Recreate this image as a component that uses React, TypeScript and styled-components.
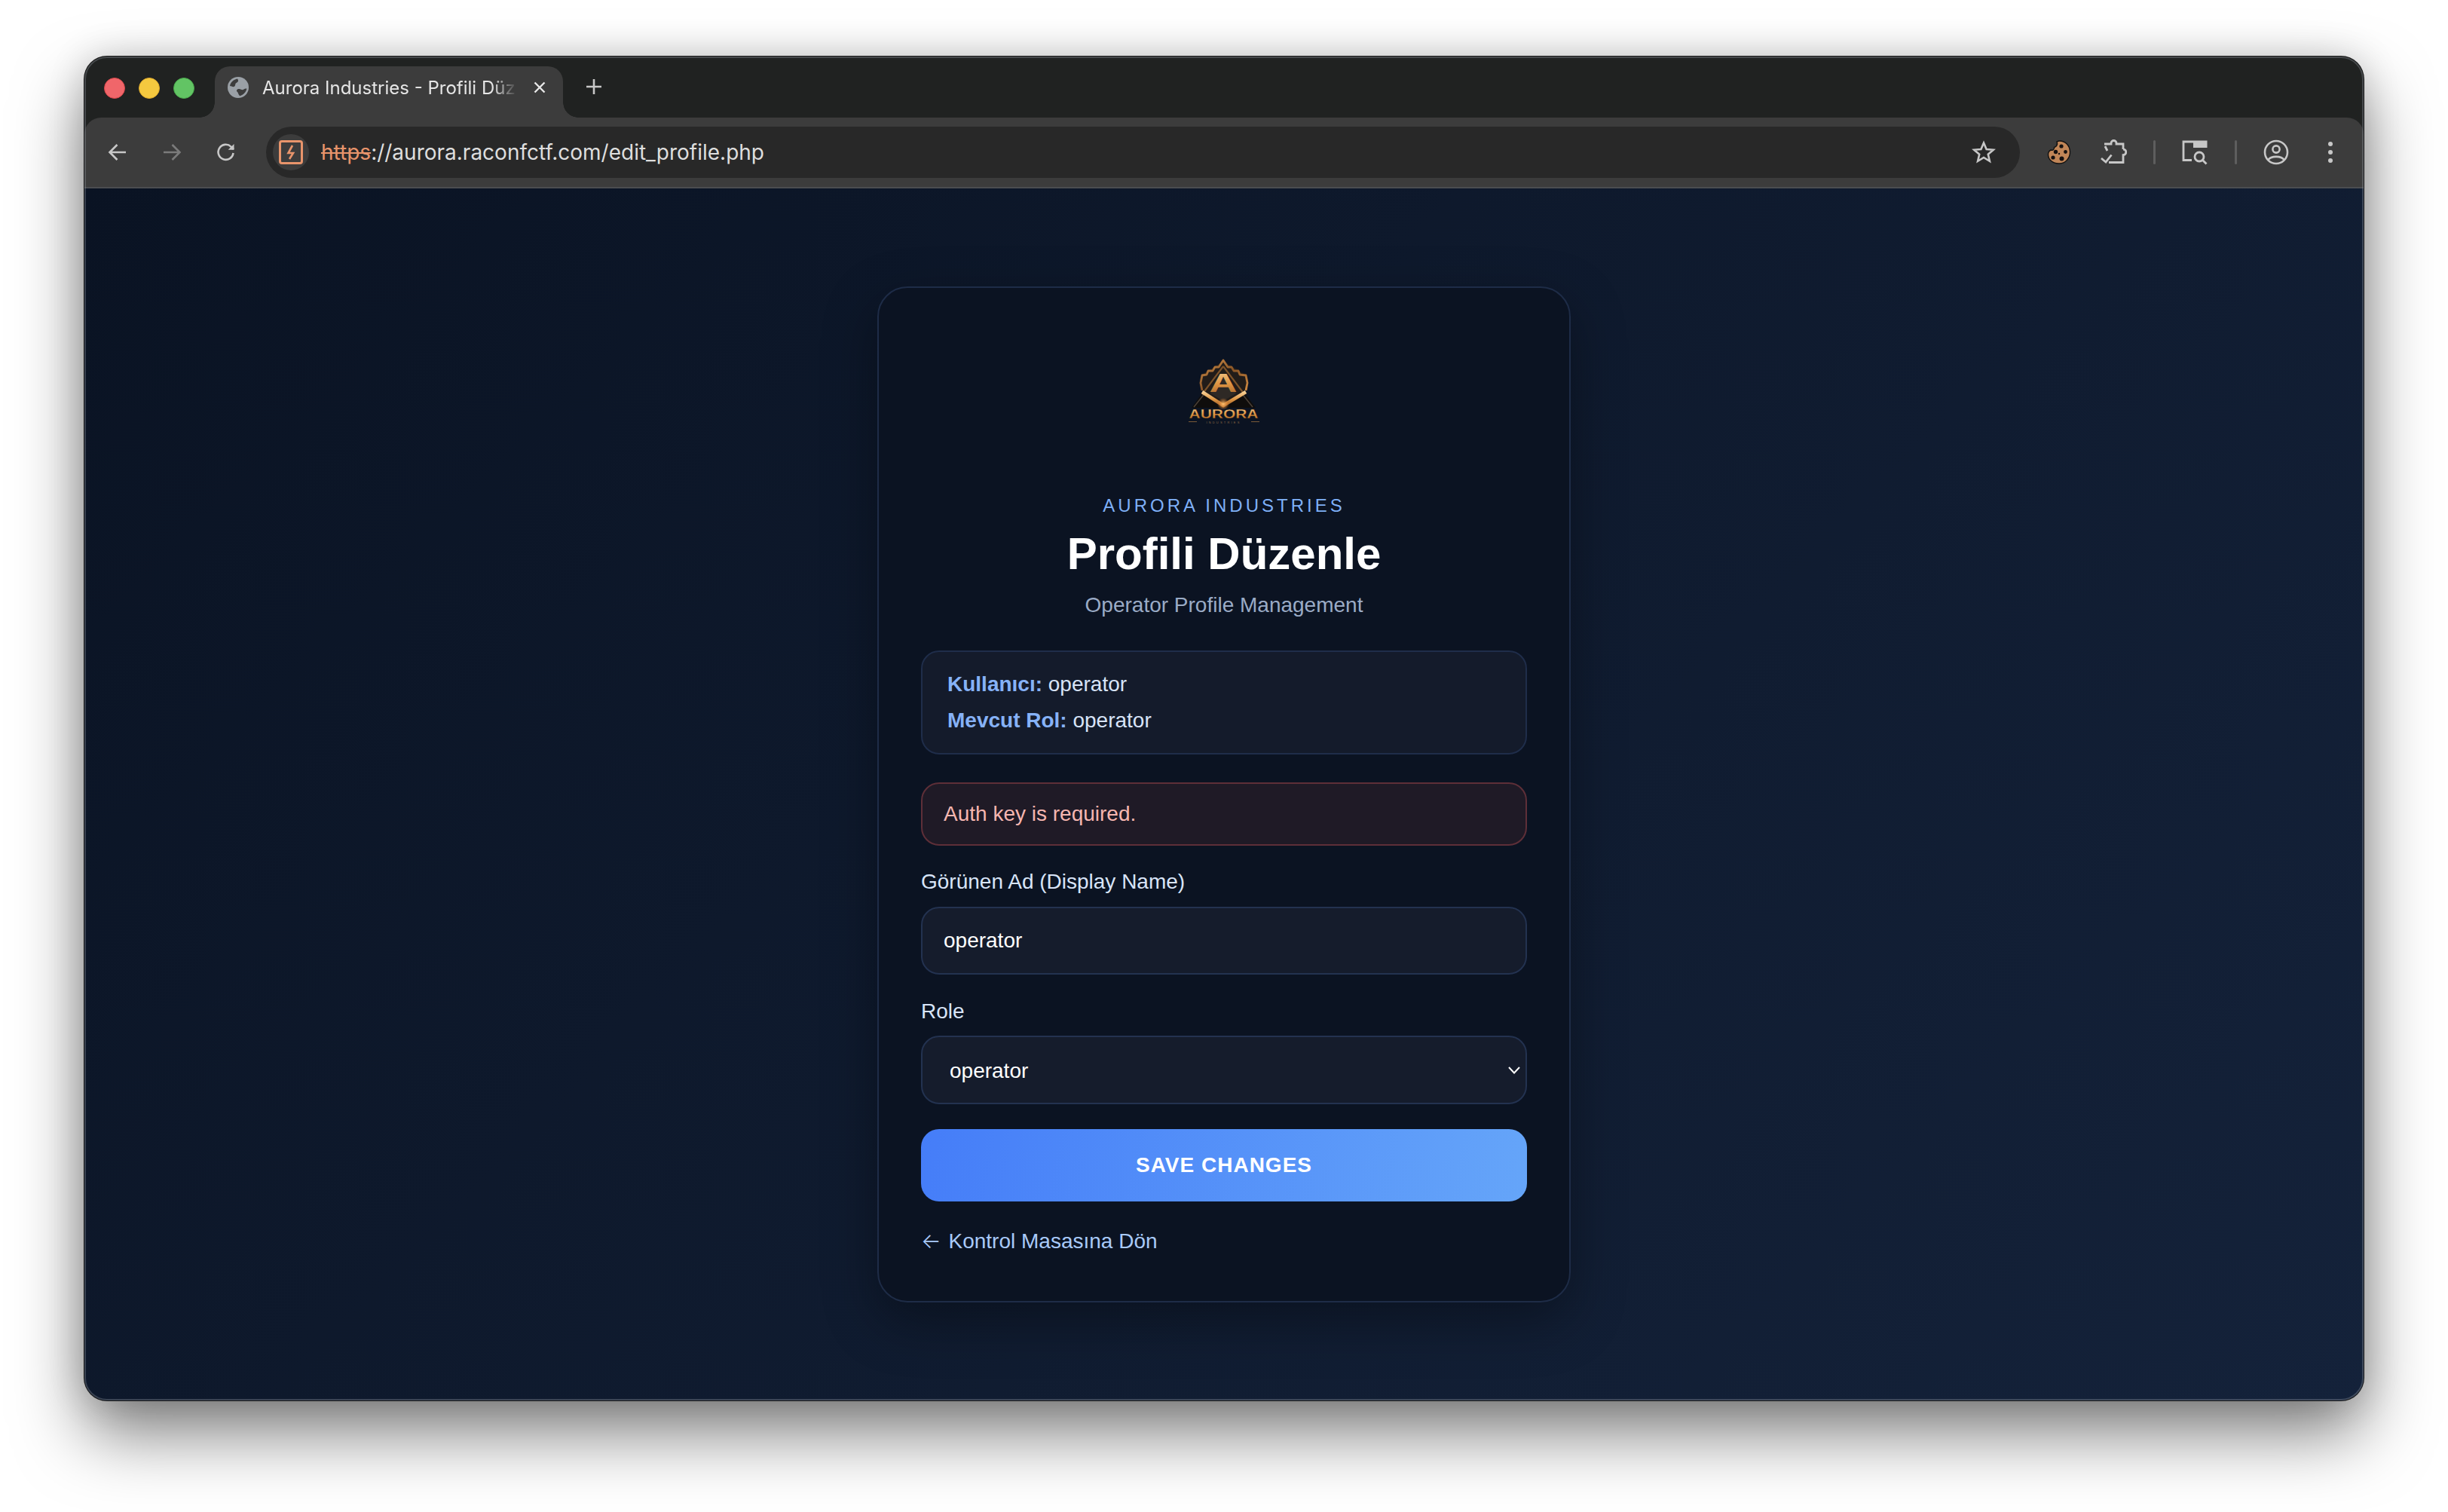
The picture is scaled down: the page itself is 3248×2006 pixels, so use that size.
import { createGlobalStyle } from 'styled-components'
import styled from 'styled-components'

const GlobalStyle = createGlobalStyle`
	html,
	body {
		margin: 0;
		background: #ffffff;
	}
	* {
		box-sizing: border-box;
	}
`

const ICON_GREY = '#c7c7c7'
const ORANGE = '#e8946b'

const Stage = styled.div`
	width: 3248px;
	height: 2006px;
	padding: 75px 112px 148px;
	overflow: hidden;
`

const BrowserWindow = styled.div`
	position: relative;
	display: flex;
	flex-direction: column;
	height: 1783px;
	border-radius: 30px;
	overflow: hidden;
	background: #202221;
	box-shadow: 0 0 0 1px #1a1a1a, 0 44px 90px rgba(0, 0, 0, 0.5), 0 0 50px rgba(0, 0, 0, 0.16);

	&::after {
		content: '';
		position: absolute;
		inset: 0;
		border-radius: 30px;
		border: 2px solid rgba(150, 155, 165, 0.33);
		pointer-events: none;
	}
`

const TabStrip = styled.div`
	display: flex;
	align-items: flex-start;
	height: 81px;
	padding: 13px 0 0 26px;
	flex-shrink: 0;
`

const TrafficLights = styled.div`
	display: flex;
	gap: 18px;
	margin-top: 15px;
`

const Light = styled.span<{ $color: string; $edge: string }>`
	width: 28px;
	height: 28px;
	border-radius: 50%;
	background: ${(props) => props.$color};
	border: 1px solid ${(props) => props.$edge};
`

const Tab = styled.div`
	position: relative;
	display: flex;
	align-items: center;
	width: 462px;
	height: 68px;
	margin-left: 27px;
	padding: 0 0 12px 17px;
	border-radius: 20px 20px 0 0;
	background: #3c3c3c;

	&::before,
	&::after {
		content: '';
		position: absolute;
		bottom: 0;
		width: 20px;
		height: 20px;
	}
	&::before {
		left: -20px;
		background: radial-gradient(circle at 0 0, transparent 19.5px, #3c3c3c 20px);
	}
	&::after {
		right: -20px;
		background: radial-gradient(circle at 100% 0, transparent 19.5px, #3c3c3c 20px);
	}
`

const TabTitle = styled.span`
	width: 342px;
	margin-left: 18px;
	white-space: nowrap;
	font: 400 24px 'Inter', 'Liberation Sans', sans-serif;
	color: #e6e6e6;
	-webkit-mask-image: linear-gradient(90deg, #000 89%, transparent 99%);
	mask-image: linear-gradient(90deg, #000 89%, transparent 99%);
`

const TabClose = styled.span`
	display: flex;
	margin-left: 17px;
	color: #e8e8e8;
`

const NewTab = styled.span`
	display: flex;
	margin: 16px 0 0 30px;
	color: ${ICON_GREY};
`

const Toolbar = styled.div`
	display: flex;
	align-items: center;
	height: 92px;
	padding: 0 8px;
	flex-shrink: 0;
	border-radius: 22px 22px 0 0;
	background: #3c3c3c;
`

const ToolbarRule = styled.div`
	height: 2px;
	flex-shrink: 0;
	background: #4b4d50;
`

const IconSlot = styled.span<{ $dim?: boolean }>`
	display: flex;
	align-items: center;
	justify-content: center;
	width: 72px;
	height: 68px;
	flex-shrink: 0;
	color: ${(props) => (props.$dim ? '#7b7b7b' : ICON_GREY)};
`

const Separator = styled.span`
	width: 36px;
	flex-shrink: 0;
	display: flex;
	justify-content: center;

	&::before {
		content: '';
		width: 3px;
		height: 32px;
		border-radius: 2px;
		background: #5e5e5e;
	}
`

const AddressBar = styled.div`
	display: flex;
	align-items: center;
	flex: 1;
	height: 68px;
	margin: 0 16px 0 17px;
	padding: 0 32px 0 9px;
	border-radius: 34px;
	background: #282828;
	color: ${ICON_GREY};
`

const SecurityChip = styled.span`
	display: flex;
	align-items: center;
	justify-content: center;
	width: 48px;
	height: 48px;
	border-radius: 50%;
	background: #3c3c3c;
	flex-shrink: 0;
`

const Url = styled.span`
	flex: 1;
	margin-left: 16px;
	font: 400 28px 'Inter', 'Liberation Sans', sans-serif;
	color: #dedede;
	white-space: nowrap;
`

const Struck = styled.span`
	color: ${ORANGE};
	text-decoration: line-through;
`

const Page = styled.div`
	flex: 1;
	display: flex;
	justify-content: center;
	align-items: flex-start;
	padding-top: 130px;
	background: linear-gradient(135deg, #0a1323 0%, #14223a 100%);
	font-family: 'Liberation Sans', Arial, sans-serif;
`

const Card = styled.div`
	display: flex;
	flex-direction: column;
	width: 920px;
	height: 1348px;
	padding: 78px 56px 0;
	border: 2px solid #1e2c47;
	border-radius: 40px;
	background: #0b1322;
	box-shadow: 0 24px 70px rgba(0, 0, 0, 0.35);
`

const LogoBox = styled.div`
	display: flex;
	justify-content: center;
	height: 110px;
	padding-left: 2px;
`

const Eyebrow = styled.div`
	margin-top: 86px;
	font-size: 24px;
	line-height: 30px;
	letter-spacing: 4px;
	text-align: center;
	color: #7fb0f7;
`

const Title = styled.h1`
	margin: 13px 0 0;
	font-size: 60px;
	line-height: 72px;
	font-weight: 700;
	text-align: center;
	color: #ffffff;
`

const Subtitle = styled.p`
	margin: 15px 0 0;
	font-size: 28px;
	line-height: 34px;
	text-align: center;
	color: #9aabc6;
`

const InfoBox = styled.div`
	margin-top: 43px;
	padding: 19px 33px 19px;
	border: 2px solid #1f2d4a;
	border-radius: 24px;
	background: #141b2b;
	font-size: 28px;
	line-height: 48px;
	color: #d8e4f8;
`

const InfoLabel = styled.strong`
	color: #86b2f7;
`

const ErrorBox = styled.div`
	margin-top: 37px;
	padding: 23px 28px 23px;
	border: 2px solid #5e2f38;
	border-radius: 24px;
	background: #1f1a26;
	font-size: 28px;
	line-height: 34px;
	color: #f6b6b0;
`

const FieldLabel = styled.label<{ $top: number; $gap: number }>`
	display: block;
	margin: ${(props) => props.$top}px 0 ${(props) => props.$gap}px;
	font-size: 28px;
	line-height: 34px;
	color: #d8e4f8;
`

const TextInput = styled.input`
	display: block;
	width: 100%;
	height: 90px;
	padding: 0 28px;
	border: 2px solid #233250;
	border-radius: 24px;
	background: #151c2c;
	font: 400 28px 'Liberation Sans', Arial, sans-serif;
	color: #ffffff;
	outline: none;
`

const RoleSelect = styled.select`
	display: block;
	width: 100%;
	height: 91px;
	padding: 2px 36px 0;
	border: 2px solid #233250;
	border-radius: 24px;
	background-color: #151c2c;
	appearance: none;
	font: 400 28px 'Liberation Sans', Arial, sans-serif;
	color: #ffffff;
	outline: none;
`

const SelectWrap = styled.div`
	position: relative;
`

const SelectCaret = styled.svg`
	position: absolute;
	right: 9px;
	top: 41px;
	pointer-events: none;
`

const SaveButton = styled.button`
	display: block;
	width: 100%;
	height: 96px;
	margin-top: 33px;
	border: 0;
	border-radius: 24px;
	background: linear-gradient(100deg, #457df8 0%, #65a5f9 100%);
	font: 700 28px 'Liberation Sans', Arial, sans-serif;
	letter-spacing: 1px;
	color: #ffffff;
`

const BackLink = styled.a`
	display: block;
	margin-top: 35px;
	font-size: 28px;
	line-height: 34px;
	color: #a9caf9;
`

const BackArrow = styled.span`
	margin-right: 2px;
	font-family: 'Inter', 'Liberation Sans', sans-serif;
	font-weight: 300;
`

const Globe = () => (
	<svg width="28" height="28" viewBox="0 0 28 28">
		<circle cx="14" cy="14" r="14" fill="#9aa0a6" />
		<path d="M3 12 C4 7 8 3.5 13 2.6 C15 5 14 7 11.5 8 C9.5 9 11 12 8.5 13 C6.5 13.6 5 12 3 12 Z" fill="#3c3c3c" />
		<path d="M25.4 15.5 C24.6 20 21 24 16.5 25.2 C14 24 14.5 21 12.5 19.5 C11 18 13 15.5 15.5 16 C18 16.6 19.5 18 21.5 16.5 C23 15.5 24 15.3 25.4 15.5 Z" fill="#3c3c3c" />
	</svg>
)

const CloseGlyph = () => (
	<svg width="18" height="18" viewBox="0 0 18 18" stroke="currentColor" strokeWidth="2.4" fill="none">
		<path d="M2.5 2.5 L15.5 15.5 M15.5 2.5 L2.5 15.5" />
	</svg>
)

const PlusGlyph = () => (
	<svg width="22" height="22" viewBox="0 0 22 22" stroke="currentColor" strokeWidth="2.6" fill="none">
		<path d="M11 1 V21 M1 11 H21" />
	</svg>
)

const BackGlyph = () => (
	<svg width="26" height="26" viewBox="0 0 26 26" stroke="currentColor" strokeWidth="2.6" fill="none">
		<path d="M24 13 H3 M12.5 3 L2.5 13 L12.5 23" />
	</svg>
)

const ForwardGlyph = () => (
	<svg width="26" height="26" viewBox="0 0 26 26" stroke="currentColor" strokeWidth="2.6" fill="none">
		<path d="M2 13 H23 M13.5 3 L23.5 13 L13.5 23" />
	</svg>
)

const ReloadGlyph = () => (
	<svg width="26" height="26" viewBox="0 0 26 26" stroke="currentColor" strokeWidth="2.6" fill="none">
		<path d="M22.5 14 A10 10 0 1 1 19.5 5.6 L23 9" />
		<path d="M23.5 2 V9.8 H15.7 Z" stroke="none" fill="currentColor" />
	</svg>
)

const InsecureGlyph = () => (
	<svg width="32" height="32" viewBox="0 0 32 32" fill="none" stroke={ORANGE}>
		<rect x="1.5" y="1.5" width="29" height="29" rx="2.5" strokeWidth="3" />
		<path d="M18 7 L12.5 17 H19 L14 25" strokeWidth="2.6" />
	</svg>
)

const StarGlyph = () => (
	<svg width="32" height="32" viewBox="0 0 32 32" stroke="currentColor" strokeWidth="2.6" fill="none">
		<path d="M16 3.5 L19.6 12 L28.8 12.8 L21.8 18.8 L23.9 27.8 L16 23 L8.1 27.8 L10.2 18.8 L3.2 12.8 L12.4 12 Z" />
	</svg>
)

const CookieGlyph = () => (
	<svg width="32" height="34" viewBox="0 0 32 34">
		<path
			d="M16 2 C24 1.5 30 8 30.5 16 C31 25 24 32 16.5 32 C8 32.5 1.5 27 1.5 20 C1.5 17 3 15 5 14 C8 15 10 13 9.5 10.5 C12.5 10 14.5 6.5 13 3 C14 2.5 15 2.2 16 2 Z"
			fill="#c08557"
			stroke="#111111"
			strokeWidth="1.4"
		/>
		<g fill="#141010">
			<circle cx="19" cy="9" r="2.6" />
			<circle cx="11.5" cy="16.5" r="2.7" />
			<circle cx="24.5" cy="16.5" r="2.4" />
			<circle cx="8" cy="24" r="2.6" />
			<circle cx="19.5" cy="25.5" r="3" />
			<circle cx="16" cy="19" r="1.2" />
		</g>
	</svg>
)

const PuzzleGlyph = () => (
	<svg width="36" height="34" viewBox="0 0 36 34" stroke="currentColor" strokeWidth="2.8" fill="none">
		<path d="M7 9 L10 15 M6 6 H15 V5 A3.5 3.5 0 0 1 22 5 V6 H31 V13" />
		<path d="M31 13 A3.8 3.8 0 0 1 31 20.6 V30.5 H12" />
		<path d="M2 25 L8 30 L15.5 20.5" />
	</svg>
)

const PanelSearchGlyph = () => (
	<svg width="36" height="34" viewBox="0 0 36 34" fill="none" stroke="currentColor" strokeWidth="2.8">
		<path d="M16 3 H3 V27.5 H14" />
		<path d="M16 1.6 H34.5 V11 H16 Z" fill="currentColor" stroke="none" />
		<circle cx="24" cy="23" r="6" />
		<path d="M28.5 27.5 L33.5 32.5" />
	</svg>
)

const ProfileGlyph = () => (
	<svg width="34" height="34" viewBox="0 0 34 34" fill="none" stroke="currentColor" strokeWidth="2.6">
		<circle cx="17" cy="17" r="15" />
		<circle cx="17" cy="13" r="4.6" />
		<path d="M6.5 27 C10 21.5 24 21.5 27.5 27" />
	</svg>
)

const DotsGlyph = () => (
	<svg width="8" height="30" viewBox="0 0 8 30" fill="currentColor">
		<circle cx="4" cy="4" r="3" />
		<circle cx="4" cy="15" r="3" />
		<circle cx="4" cy="26" r="3" />
	</svg>
)

const AuroraLogo = () => (
	<svg width="170" height="110" viewBox="0 0 170 110" fontFamily="'Liberation Sans', Arial, sans-serif">
		<defs>
			<linearGradient id="gold" x1="0" y1="0" x2="0" y2="1">
				<stop offset="0" stopColor="#f7cf94" />
				<stop offset="0.55" stopColor="#dd9442" />
				<stop offset="1" stopColor="#a0602a" />
			</linearGradient>
			<linearGradient id="trim" x1="0" y1="0" x2="1" y2="1">
				<stop offset="0" stopColor="#d4934c" />
				<stop offset="0.5" stopColor="#8a5526" />
				<stop offset="1" stopColor="#cf8a42" />
			</linearGradient>
			<radialGradient id="glow">
				<stop offset="0" stopColor="#ffc473" />
				<stop offset="1" stopColor="#ff8a2a" stopOpacity="0" />
			</radialGradient>
		</defs>
		{/* dark base triangle */}
		<polygon points="83,24 126,81 41,81" fill="#0f0d0c" />
		<path d="M44 80 L72 45 M122 80 L94 45" stroke="#4a4038" strokeWidth="1.5" />
		{/* hex plate */}
		<polygon points="83,19 113,37 113,60 83,78 55,60 54,37" fill="#211c19" />
		<polygon points="83,38 100,62 83,72 66,62" fill="#2e2925" />
		{/* gear trim */}
		<polyline
			points="55,58 53,48 55,38 61,37 63,32 69,32 72,27 77,27 83,18 89,27 94,27 97,32 103,32 105,37 113,38 115,48 113,58"
			fill="none"
			stroke="url(#trim)"
			strokeWidth="2.8"
			strokeLinejoin="round"
		/>
		{/* inner frame */}
		<path d="M83 26 L111 63 M83 26 L55 63" stroke="#7c5229" strokeWidth="2.2" />
		<text x="83" y="60" fontSize="35" fontWeight="700" textAnchor="middle" textLength="37" lengthAdjust="spacingAndGlyphs" fill="url(#gold)">
			A
		</text>
		{/* chevron */}
		<polyline points="55,60 83,78 113,60" fill="none" stroke="url(#gold)" strokeWidth="4.6" />
		<circle cx="83" cy="76" r="8" fill="url(#glow)" />
		<text x="83.5" y="95" fontSize="16.5" fontWeight="700" textAnchor="middle" textLength="92" lengthAdjust="spacingAndGlyphs" fill="url(#gold)" stroke="#2a1708" strokeWidth="0.3">
			AURORA
		</text>
		<text x="83.5" y="101.5" fontSize="4" textAnchor="middle" letterSpacing="2.2" fill="#8a6a45">
			INDUSTRIES
		</text>
		<path d="M37 99.5 H48 M120 99.5 H131" stroke="#7a5a38" strokeWidth="1" />
	</svg>
)

const App = () => (
	<Stage>
		<GlobalStyle />
		<BrowserWindow>
			<TabStrip>
				<TrafficLights>
					<Light $color="#f0666a" $edge="#d8474b" />
					<Light $color="#f5c93f" $edge="#dda92c" />
					<Light $color="#62c464" $edge="#4aa84c" />
				</TrafficLights>
				<Tab>
					<Globe />
					<TabTitle>Aurora Industries - Profili Düz</TabTitle>
					<TabClose>
						<CloseGlyph />
					</TabClose>
				</Tab>
				<NewTab>
					<PlusGlyph />
				</NewTab>
			</TabStrip>
			<Toolbar>
				<IconSlot>
					<BackGlyph />
				</IconSlot>
				<IconSlot $dim>
					<ForwardGlyph />
				</IconSlot>
				<IconSlot>
					<ReloadGlyph />
				</IconSlot>
				<AddressBar>
					<SecurityChip>
						<InsecureGlyph />
					</SecurityChip>
					<Url>
						<Struck>https</Struck>://aurora.raconfctf.com/edit_profile.php
					</Url>
					<StarGlyph />
				</AddressBar>
				<IconSlot>
					<CookieGlyph />
				</IconSlot>
				<IconSlot>
					<PuzzleGlyph />
				</IconSlot>
				<Separator />
				<IconSlot>
					<PanelSearchGlyph />
				</IconSlot>
				<Separator />
				<IconSlot>
					<ProfileGlyph />
				</IconSlot>
				<IconSlot>
					<DotsGlyph />
				</IconSlot>
			</Toolbar>
			<ToolbarRule />
			<Page>
				<Card>
					<LogoBox>
						<AuroraLogo />
					</LogoBox>
					<Eyebrow>AURORA INDUSTRIES</Eyebrow>
					<Title>Profili Düzenle</Title>
					<Subtitle>Operator Profile Management</Subtitle>
					<InfoBox>
						<div>
							<InfoLabel>Kullanıcı:</InfoLabel> operator
						</div>
						<div>
							<InfoLabel>Mevcut Rol:</InfoLabel> operator
						</div>
					</InfoBox>
					<ErrorBox>Auth key is required.</ErrorBox>
					<FieldLabel $top={31} $gap={16}>
						Görünen Ad (Display Name)
					</FieldLabel>
					<TextInput defaultValue="operator" />
					<FieldLabel $top={32} $gap={15}>
						Role
					</FieldLabel>
					<SelectWrap>
						<RoleSelect defaultValue="operator">
							<option value="operator">operator</option>
						</RoleSelect>
						<SelectCaret width="16" height="10" viewBox="0 0 16 10" fill="none" stroke="#ffffff" strokeWidth="2">
							<path d="M1 1 L8 8.5 L15 1" />
						</SelectCaret>
					</SelectWrap>
					<SaveButton>SAVE CHANGES</SaveButton>
					<BackLink>
						<BackArrow>←</BackArrow> Kontrol Masasına Dön
					</BackLink>
				</Card>
			</Page>
		</BrowserWindow>
	</Stage>
)

export default App
